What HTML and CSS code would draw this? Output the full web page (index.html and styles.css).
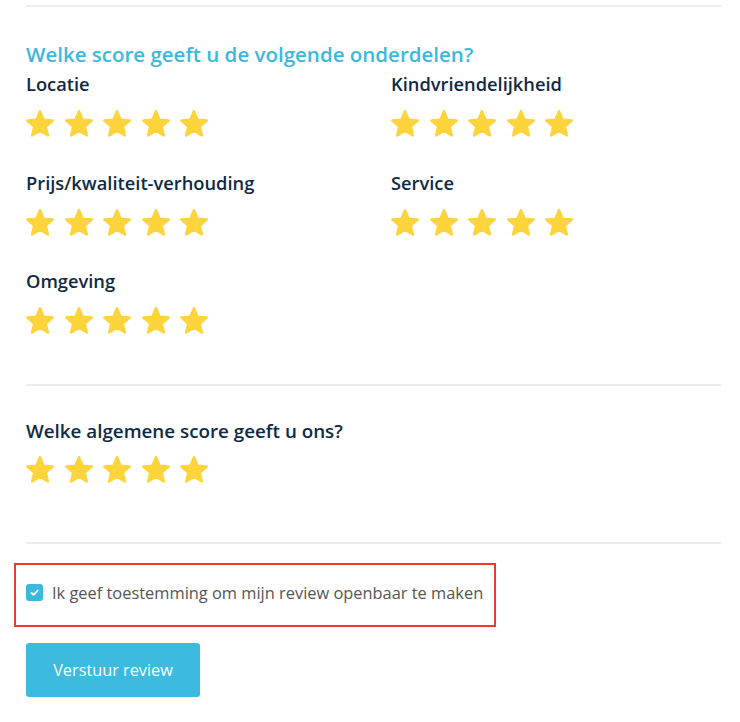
FILE: index.html
```html
<!DOCTYPE html>
<html>
<head>
<meta charset="utf-8">
<link rel="stylesheet" href="styles.css">
</head>
<body>
<div class="page">
  <div class="divider first"></div>
  <section class="parts">
    <h2 class="title">Welke score geeft u de volgende onderdelen?</h2>
    <div class="grid">
      <div class="item">
        <div class="label">Locatie</div>
        <div class="stars"><svg class="star" viewBox="1 1 22 21"><path d="M12 17.27L18.18 21l-1.64-7.03L22 9.24l-7.19-.61L12 2 9.19 8.63 2 9.24l5.46 4.73L5.82 21z"/></svg><svg class="star" viewBox="1 1 22 21"><path d="M12 17.27L18.18 21l-1.64-7.03L22 9.24l-7.19-.61L12 2 9.19 8.63 2 9.24l5.46 4.73L5.82 21z"/></svg><svg class="star" viewBox="1 1 22 21"><path d="M12 17.27L18.18 21l-1.64-7.03L22 9.24l-7.19-.61L12 2 9.19 8.63 2 9.24l5.46 4.73L5.82 21z"/></svg><svg class="star" viewBox="1 1 22 21"><path d="M12 17.27L18.18 21l-1.64-7.03L22 9.24l-7.19-.61L12 2 9.19 8.63 2 9.24l5.46 4.73L5.82 21z"/></svg><svg class="star" viewBox="1 1 22 21"><path d="M12 17.27L18.18 21l-1.64-7.03L22 9.24l-7.19-.61L12 2 9.19 8.63 2 9.24l5.46 4.73L5.82 21z"/></svg></div>
      </div>
      <div class="item">
        <div class="label">Kindvriendelijkheid</div>
        <div class="stars"><svg class="star" viewBox="1 1 22 21"><path d="M12 17.27L18.18 21l-1.64-7.03L22 9.24l-7.19-.61L12 2 9.19 8.63 2 9.24l5.46 4.73L5.82 21z"/></svg><svg class="star" viewBox="1 1 22 21"><path d="M12 17.27L18.18 21l-1.64-7.03L22 9.24l-7.19-.61L12 2 9.19 8.63 2 9.24l5.46 4.73L5.82 21z"/></svg><svg class="star" viewBox="1 1 22 21"><path d="M12 17.27L18.18 21l-1.64-7.03L22 9.24l-7.19-.61L12 2 9.19 8.63 2 9.24l5.46 4.73L5.82 21z"/></svg><svg class="star" viewBox="1 1 22 21"><path d="M12 17.27L18.18 21l-1.64-7.03L22 9.24l-7.19-.61L12 2 9.19 8.63 2 9.24l5.46 4.73L5.82 21z"/></svg><svg class="star" viewBox="1 1 22 21"><path d="M12 17.27L18.18 21l-1.64-7.03L22 9.24l-7.19-.61L12 2 9.19 8.63 2 9.24l5.46 4.73L5.82 21z"/></svg></div>
      </div>
      <div class="item">
        <div class="label">Prijs/kwaliteit-verhouding</div>
        <div class="stars"><svg class="star" viewBox="1 1 22 21"><path d="M12 17.27L18.18 21l-1.64-7.03L22 9.24l-7.19-.61L12 2 9.19 8.63 2 9.24l5.46 4.73L5.82 21z"/></svg><svg class="star" viewBox="1 1 22 21"><path d="M12 17.27L18.18 21l-1.64-7.03L22 9.24l-7.19-.61L12 2 9.19 8.63 2 9.24l5.46 4.73L5.82 21z"/></svg><svg class="star" viewBox="1 1 22 21"><path d="M12 17.27L18.18 21l-1.64-7.03L22 9.24l-7.19-.61L12 2 9.19 8.63 2 9.24l5.46 4.73L5.82 21z"/></svg><svg class="star" viewBox="1 1 22 21"><path d="M12 17.27L18.18 21l-1.64-7.03L22 9.24l-7.19-.61L12 2 9.19 8.63 2 9.24l5.46 4.73L5.82 21z"/></svg><svg class="star" viewBox="1 1 22 21"><path d="M12 17.27L18.18 21l-1.64-7.03L22 9.24l-7.19-.61L12 2 9.19 8.63 2 9.24l5.46 4.73L5.82 21z"/></svg></div>
      </div>
      <div class="item">
        <div class="label">Service</div>
        <div class="stars"><svg class="star" viewBox="1 1 22 21"><path d="M12 17.27L18.18 21l-1.64-7.03L22 9.24l-7.19-.61L12 2 9.19 8.63 2 9.24l5.46 4.73L5.82 21z"/></svg><svg class="star" viewBox="1 1 22 21"><path d="M12 17.27L18.18 21l-1.64-7.03L22 9.24l-7.19-.61L12 2 9.19 8.63 2 9.24l5.46 4.73L5.82 21z"/></svg><svg class="star" viewBox="1 1 22 21"><path d="M12 17.27L18.18 21l-1.64-7.03L22 9.24l-7.19-.61L12 2 9.19 8.63 2 9.24l5.46 4.73L5.82 21z"/></svg><svg class="star" viewBox="1 1 22 21"><path d="M12 17.27L18.18 21l-1.64-7.03L22 9.24l-7.19-.61L12 2 9.19 8.63 2 9.24l5.46 4.73L5.82 21z"/></svg><svg class="star" viewBox="1 1 22 21"><path d="M12 17.27L18.18 21l-1.64-7.03L22 9.24l-7.19-.61L12 2 9.19 8.63 2 9.24l5.46 4.73L5.82 21z"/></svg></div>
      </div>
      <div class="item">
        <div class="label">Omgeving</div>
        <div class="stars"><svg class="star" viewBox="1 1 22 21"><path d="M12 17.27L18.18 21l-1.64-7.03L22 9.24l-7.19-.61L12 2 9.19 8.63 2 9.24l5.46 4.73L5.82 21z"/></svg><svg class="star" viewBox="1 1 22 21"><path d="M12 17.27L18.18 21l-1.64-7.03L22 9.24l-7.19-.61L12 2 9.19 8.63 2 9.24l5.46 4.73L5.82 21z"/></svg><svg class="star" viewBox="1 1 22 21"><path d="M12 17.27L18.18 21l-1.64-7.03L22 9.24l-7.19-.61L12 2 9.19 8.63 2 9.24l5.46 4.73L5.82 21z"/></svg><svg class="star" viewBox="1 1 22 21"><path d="M12 17.27L18.18 21l-1.64-7.03L22 9.24l-7.19-.61L12 2 9.19 8.63 2 9.24l5.46 4.73L5.82 21z"/></svg><svg class="star" viewBox="1 1 22 21"><path d="M12 17.27L18.18 21l-1.64-7.03L22 9.24l-7.19-.61L12 2 9.19 8.63 2 9.24l5.46 4.73L5.82 21z"/></svg></div>
      </div>
    </div>
  </section>
  <div class="divider"></div>
  <section class="overall">
    <h3 class="label big">Welke algemene score geeft u ons?</h3>
    <div class="stars"><svg class="star" viewBox="1 1 22 21"><path d="M12 17.27L18.18 21l-1.64-7.03L22 9.24l-7.19-.61L12 2 9.19 8.63 2 9.24l5.46 4.73L5.82 21z"/></svg><svg class="star" viewBox="1 1 22 21"><path d="M12 17.27L18.18 21l-1.64-7.03L22 9.24l-7.19-.61L12 2 9.19 8.63 2 9.24l5.46 4.73L5.82 21z"/></svg><svg class="star" viewBox="1 1 22 21"><path d="M12 17.27L18.18 21l-1.64-7.03L22 9.24l-7.19-.61L12 2 9.19 8.63 2 9.24l5.46 4.73L5.82 21z"/></svg><svg class="star" viewBox="1 1 22 21"><path d="M12 17.27L18.18 21l-1.64-7.03L22 9.24l-7.19-.61L12 2 9.19 8.63 2 9.24l5.46 4.73L5.82 21z"/></svg><svg class="star" viewBox="1 1 22 21"><path d="M12 17.27L18.18 21l-1.64-7.03L22 9.24l-7.19-.61L12 2 9.19 8.63 2 9.24l5.46 4.73L5.82 21z"/></svg></div>
  </section>
  <div class="divider"></div>
  <label class="consent">
    <span class="check"><svg viewBox="0 0 16 16"><path d="M4.8 8.4l2.2 2.1 4.3-4.6"/></svg></span>
    <span class="consent-text">Ik geef toestemming om mijn review openbaar te maken</span>
  </label>
  <button class="submit">Verstuur review</button>
</div>
</body>
</html>
```

FILE: styles.css
```css
* { box-sizing: border-box; }
html, body { margin: 0; padding: 0; background: #fff; }
body { font-family: "Open Sans", "Lato", sans-serif; }
.page { padding: 0 19px 0 26px; }
.divider { height: 2px; background: #ececec; }
.divider.first { margin-top: 5px; }
.parts { padding-top: 34.5px; padding-bottom: 49.5px; }
.title { margin: 0; font-size: 20.5px; line-height: 24px; font-weight: 600; color: #3bb9dd; }
.grid { display: grid; grid-template-columns: 365px 1fr; row-gap: 35px; margin-top: 7.5px; }
.label { margin: 0; font-size: 18.3px; line-height: 22px; font-weight: 600; color: #0e2a46; }
.stars { display: flex; gap: 10.5px; margin-top: 15px; }
.star { width: 28px; height: 26.7px; display: block; overflow: visible; }
.star path { fill: #fed43d; stroke: #fed43d; stroke-width: 2; stroke-linejoin: round; }
.overall { padding-top: 34px; padding-bottom: 59.5px; }
.overall .stars { margin-top: 14px; }
.big { font-size: 18.8px; }
.consent { display: flex; align-items: center; gap: 9px; width: 482px; height: 64px; margin: 19px 0 0 -12px; padding: 0 0 4px 10px; border: 2px solid #ec3a2c; cursor: pointer; }
.check { width: 17px; height: 17px; border-radius: 3px; background: #3bb9dd; display: flex; align-items: center; justify-content: center; flex: none; }
.check svg { width: 15px; height: 15px; }
.check path { fill: none; stroke: #fff; stroke-width: 2; stroke-linecap: round; stroke-linejoin: round; }
.consent-text { font-size: 16.4px; color: #555; }
.submit { display: block; margin-top: 16px; width: 174px; height: 54px; border: 0; border-radius: 3px; background: #3dbadf; color: #fff; font-family: inherit; font-size: 16.3px; cursor: pointer; }
```
